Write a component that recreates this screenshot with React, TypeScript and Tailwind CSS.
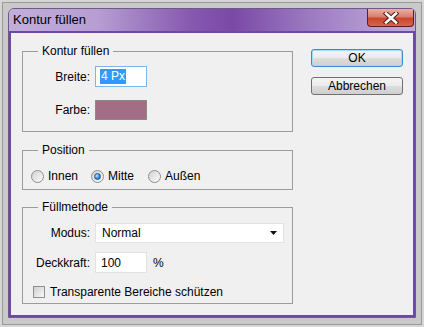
import React from 'react';

const Radio: React.FC<{ checked?: boolean }> = ({ checked = false }) => (
  <span className="w-[13px] h-[13px] rounded-full border border-[#8e8f8f] bg-gradient-to-br from-[#d2d2d2] to-[#fbfbfb] flex items-center justify-center shrink-0">
    {checked && (
      <span className="w-[7px] h-[7px] rounded-full bg-[radial-gradient(circle_at_35%_35%,#bfe9ff,#2a86d6_60%,#0a4f9a)] border border-[#1d5a92]" />
    )}
  </span>
);

const Group: React.FC<{ title: string; className?: string; children: React.ReactNode }> = ({
  title,
  className = '',
  children
}) => (
  <div className={`relative border border-[#9c9c9c] ${className}`}>
    <span className="absolute -top-[8px] left-[15px] px-[4px] bg-[#f0f0f0] leading-[14px]">{title}</span>
    {children}
  </div>
);

const Button: React.FC<{ label: string; primary?: boolean }> = ({ label, primary = false }) => (
  <button
    className={`h-[18px] w-full rounded-[3px] border leading-[16px] bg-[linear-gradient(#f4f4f4,#ebebeb_50%,#dddddd_51%,#cfcfcf)] ${
      primary ? 'border-[#3c8ac9] shadow-[inset_0_0_0_1px_#9fdcfa]' : 'border-[#707070]'
    }`}
  >
    {label}
  </button>
);

export default function App() {
  return (
    <div className="w-[424px] h-[327px] bg-[#d6d6d6] p-[2px] font-['Liberation_Sans',Arial,sans-serif] text-[12px] text-black">
      <div className="h-full border border-[#9a9a9a] bg-[#c9c9c9] pt-[5px] px-[5px]">
        <div className="w-[408px] h-[310px] flex flex-col border border-[#6e5a86] rounded-t-[6px] overflow-hidden">
          {/* title bar */}
          <div className="h-[22px] flex items-start justify-between bg-[linear-gradient(90deg,#c3aedb,#b69dd2_22%,#8658b0_45%,#7a49a6_55%,#9e7cc3_75%,#b49bd3_90%,#c0aada)]">
            <span className="self-center pl-[4px] leading-[14px] text-[13px]">Kontur füllen</span>
            <div className="w-[47px] h-[18px] mr-[1px] rounded-b-[4px] border border-t-0 border-[#5b2020] bg-[linear-gradient(#eab0a4,#d8806c_45%,#c8472f_55%,#d6654a)] flex items-center justify-center">
              <svg width="16" height="12" viewBox="0 0 16 12">
                <path d="M3 1.5 L13 10.5 M13 1.5 L3 10.5" stroke="#4a1a1a" strokeWidth="4.5" strokeLinecap="square" />
                <path d="M3 1.5 L13 10.5 M13 1.5 L3 10.5" stroke="#ffffff" strokeWidth="2.6" strokeLinecap="square" />
              </svg>
            </div>
          </div>

          {/* content */}
          <div className="flex-1 border-2 border-[#6f47a6] bg-[#f0f0f0] flex pl-[11px] pr-[10px]">
            <div className="w-[271px] flex flex-col pt-[18px]">
              <Group title="Kontur füllen" className="h-[81px] pt-[14px]">
                <div className="flex items-center">
                  <span className="w-[67px] text-right">Breite:</span>
                  <div className="ml-[5px] w-[52px] h-[21px] border border-[#7eb4ea] bg-white flex items-center pl-[4px]">
                    <span className="bg-[#3399ff] text-white px-[1px] leading-[15px]">4 Px</span>
                  </div>
                </div>
                <div className="flex items-center mt-[13px]">
                  <span className="w-[67px] text-right">Farbe:</span>
                  <div className="ml-[5px] w-[52px] h-[20px] border border-[#8a8a8a] bg-[#a36d86]" />
                </div>
              </Group>

              <Group title="Position" className="h-[40px] mt-[18px] flex items-center pt-[12px] pl-[8px]">
                <div className="flex items-center gap-[4px]">
                  <Radio />
                  <span>Innen</span>
                </div>
                <div className="flex items-center gap-[4px] ml-[13px]">
                  <Radio checked />
                  <span>Mitte</span>
                </div>
                <div className="flex items-center gap-[4px] ml-[14px]">
                  <Radio />
                  <span>Außen</span>
                </div>
              </Group>

              <Group title="Füllmethode" className="h-[97px] mt-[17px] pt-[15px]">
                <div className="flex items-center">
                  <span className="w-[67px] text-right">Modus:</span>
                  <div className="ml-[5px] w-[189px] h-[20px] border border-[#e2e2e2] bg-white flex items-center justify-between pl-[6px] pr-[6px]">
                    <span>Normal</span>
                    <svg width="7" height="4" viewBox="0 0 7 4">
                      <path d="M0 0 H7 L3.5 4 Z" fill="#111" />
                    </svg>
                  </div>
                </div>
                <div className="flex items-center mt-[9px]">
                  <span className="w-[67px] text-right">Deckkraft:</span>
                  <div className="ml-[5px] w-[52px] h-[21px] border border-[#e2e2e2] bg-white flex items-center pl-[5px]">
                    100
                  </div>
                  <span className="ml-[6px]">%</span>
                </div>
                <div className="flex items-center mt-[10px] pl-[10px] gap-[5px]">
                  <span className="w-[12px] h-[12px] border border-[#8e8f8f] bg-gradient-to-br from-[#d0d0d0] to-[#f8f8f8]" />
                  <span>Transparente Bereiche schützen</span>
                </div>
              </Group>
            </div>

            <div className="w-[92px] ml-[18px] pt-[16px] flex flex-col gap-[10px]">
              <Button label="OK" primary />
              <Button label="Abbrechen" />
            </div>
          </div>
        </div>
      </div>
    </div>
  );
}
